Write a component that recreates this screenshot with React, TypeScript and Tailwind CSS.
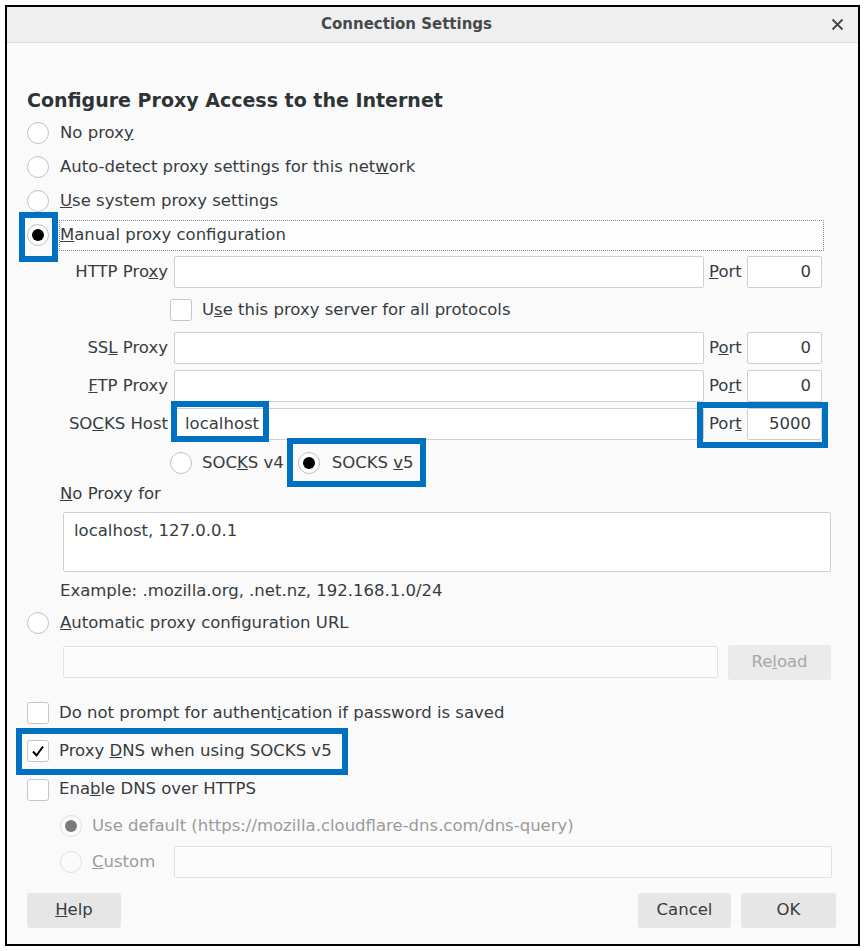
import React from 'react'

const font = { fontFamily: '"DejaVu Sans", Verdana, sans-serif' }

const Radio = ({ checked = false, disabled = false }: { checked?: boolean; disabled?: boolean }) => (
  <span
    className={`w-[22px] h-[22px] shrink-0 rounded-full border flex items-center justify-center ${
      disabled ? 'border-[#dedede] bg-[#fbfbfb]' : 'border-[#c2c2c2] bg-white'
    }`}
  >
    {checked && <span className={`w-[12px] h-[12px] rounded-full ${disabled ? 'bg-[#7a7a7a]' : 'bg-black'}`} />}
  </span>
)

const Check = ({ checked = false }: { checked?: boolean }) => (
  <span className="w-[22px] h-[22px] shrink-0 rounded-[3px] border border-[#c6c6c6] bg-white flex items-center justify-center">
    {checked && (
      <svg width="14" height="14" viewBox="0 0 14 14">
        <path d="M2 7.5 L5.5 11.5 L12 2.5" fill="none" stroke="black" strokeWidth="2" />
      </svg>
    )}
  </span>
)

const Input = ({ className = '', value = '', align = 'left', disabled = false }: { className?: string; value?: string; align?: string; disabled?: boolean }) => (
  <div
    className={`h-[32px] border rounded-[2px] flex items-center px-[10px] ${
      disabled ? 'border-[#e2e2e2] bg-[#fcfcfc]' : 'border-[#cfcfcf] bg-white'
    } ${align === 'right' ? 'justify-end' : ''} ${className}`}
  >
    {value}
  </div>
)

const ProxyRow = ({ label, port, value = '', pv = '0' }: { label: React.ReactNode; port: React.ReactNode; value?: string; pv?: string }) => (
  <div className="h-[38px] flex items-center">
    <div className="w-[108px] text-right">{label}</div>
    <Input className="ml-[6px] w-[530px]" value={value} />
    <div className="ml-[5px] w-[38px]">{port}</div>
    <Input className="w-[75px]" value={pv} align="right" />
  </div>
)

const Btn = ({ children, className = '' }: { children: React.ReactNode; className?: string }) => (
  <div className={`h-[35px] rounded-[3px] bg-[#e6e6e6] flex items-center justify-center ${className}`}>{children}</div>
)

const Mark = ({ className }: { className: string }) => (
  <div className={`absolute border-[6px] border-[#0070c0] ${className}`} />
)

export default function App() {
  return (
    <div className="relative w-[865px] h-[951px] bg-white p-[5px] text-[16.5px] text-[#363c40]" style={font}>
      <div className="w-full h-full border-2 border-black flex flex-col bg-[#fafafa]">
        <div className="h-[36px] shrink-0 bg-[#efefef] border-b border-dotted border-[#c8c8c8] flex items-center relative">
          <div className="flex-1 text-center font-bold text-[15px] text-[#45494c] pr-[52px]">Connection Settings</div>
          <svg className="absolute right-[14px] top-[11px]" width="13" height="13" viewBox="0 0 13 13">
            <path d="M1.5 1.5 L11.5 11.5 M11.5 1.5 L1.5 11.5" stroke="#444" strokeWidth="1.8" />
          </svg>
        </div>

        <div className="flex flex-col pl-[20px] pt-[43px]">
          <div className="h-[28px] flex items-center font-bold text-[19px] text-[#2e3436]">Configure Proxy Access to the Internet</div>
          <div className="h-[2px]" />
          <div className="h-[34px] flex items-center gap-[11px]"><Radio /><span>No prox<u>y</u></span></div>
          <div className="h-[34px] flex items-center gap-[11px]"><Radio /><span>Auto-detect proxy settings for this net<u>w</u>ork</span></div>
          <div className="h-[34px] flex items-center gap-[11px]"><Radio /><span><u>U</u>se system proxy settings</span></div>
          <div className="h-[34px] flex items-center gap-[10px]">
            <Radio checked />
            <div className="w-[765px] h-[31px] border border-dotted border-[#8a8a8a] bg-[#fdfdfd] flex items-center"><span><u>M</u>anual proxy configuration</span></div>
          </div>

          <div className="pl-[33px] flex flex-col mt-[1px]">
            <ProxyRow label={<>HTTP Pro<u>x</u>y</>} port={<><u>P</u>ort</>} />
            <div className="h-[38px] flex items-center gap-[10px] pl-[110px]"><Check /><span>U<u>s</u>e this proxy server for all protocols</span></div>
            <ProxyRow label={<>SS<u>L</u> Proxy</>} port={<>P<u>o</u>rt</>} />
            <ProxyRow label={<><u>F</u>TP Proxy</>} port={<>Po<u>r</u>t</>} />
            <ProxyRow label={<>SO<u>C</u>KS Host</>} port={<>Por<u>t</u></>} value="localhost" pv="5000" />
            <div className="h-[40px] flex items-center pl-[110px]">
              <Radio />
              <span className="ml-[10px]">SOC<u>K</u>S v4</span>
              <span className="ml-[14px]"><Radio checked /></span>
              <span className="ml-[12px]">SOCKS <u>v</u>5</span>
            </div>
            <div className="h-[22px] flex items-center"><span><u>N</u>o Proxy for</span></div>
            <div className="mt-[7px] ml-[3px] w-[768px] h-[60px] border border-[#cfcfcf] rounded-[2px] bg-white px-[10px] pt-[8px] leading-[20px]">localhost, 127.0.0.1</div>
            <div className="h-[38px] flex items-center">Example: .mozilla.org, .net.nz, 192.168.1.0/24</div>
          </div>

          <div className="h-[26px] flex items-center gap-[11px]"><Radio /><span><u>A</u>utomatic proxy configuration URL</span></div>
          <div className="mt-[8px] h-[36px] flex items-center pl-[36px]">
            <Input className="w-[655px]" disabled />
            <div className="ml-[10px] w-[103px] h-[35px] rounded-[3px] bg-[#ebebeb] text-[#a8a8a8] flex items-center justify-center"><span>Re<u>l</u>oad</span></div>
          </div>

          <div className="mt-[14px] h-[38px] flex items-center gap-[10px]"><Check /><span>Do not prompt for authent<u>i</u>cation if password is saved</span></div>
          <div className="h-[38px] flex items-center gap-[10px]"><Check checked /><span>Proxy <u>D</u>NS when using SOCKS v5</span></div>
          <div className="h-[39px] flex items-center gap-[10px]"><Check /><span>Ena<u>b</u>le DNS over HTTPS</span></div>
          <div className="h-[34px] flex items-center gap-[10px] pl-[33px] text-[#9b9b9b]"><Radio checked disabled /><span>Use default (https://mozilla.cloudflare-dns.com/dns-query)</span></div>
          <div className="h-[38px] flex items-center pl-[33px] text-[#9b9b9b]">
            <Radio disabled />
            <span className="ml-[10px]"><u>C</u>ustom</span>
            <Input className="ml-[19px] w-[658px]" disabled />
          </div>

          <div className="mt-[12px] flex items-center">
            <Btn className="w-[94px]"><span><u>H</u>elp</span></Btn>
            <Btn className="ml-[517px] w-[93px]">Cancel</Btn>
            <Btn className="ml-[10px] w-[95px]">OK</Btn>
          </div>
        </div>
      </div>

      <Mark className="left-[19px] top-[212px] w-[39px] h-[50px]" />
      <Mark className="left-[171px] top-[401px] w-[98px] h-[41px]" />
      <Mark className="left-[697px] top-[402px] w-[131px] h-[46px]" />
      <Mark className="left-[287px] top-[438px] w-[139px] h-[49px]" />
      <Mark className="left-[16px] top-[728px] w-[332px] h-[47px]" />
    </div>
  )
}
